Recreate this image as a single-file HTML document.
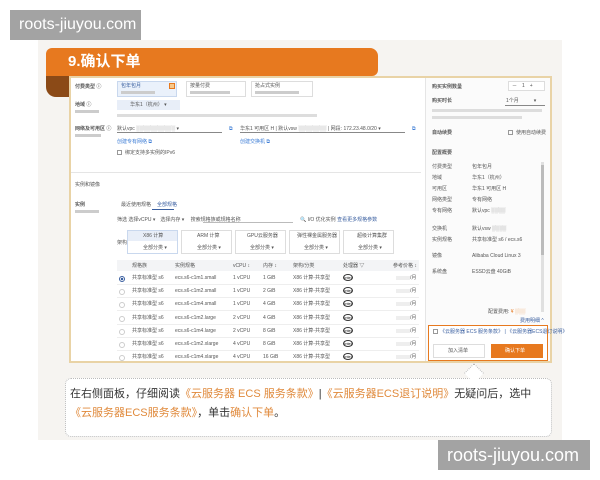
<!DOCTYPE html>
<html><head><meta charset="utf-8"><style>
*{margin:0;padding:0;box-sizing:border-box}
body{width:600px;height:480px;background:#fff;position:relative;overflow:hidden;font-family:"Liberation Sans","Noto Sans CJK SC",sans-serif}
.a{position:absolute}
.wm{background:#a3a3a3;color:#fff;font-size:16px;line-height:30px;padding-left:9px;white-space:nowrap;overflow:hidden}
.t{position:absolute;font-size:5px;color:#555;white-space:nowrap;line-height:6px}
.g{position:absolute;height:3px;background:#ccc}
.box{position:absolute;border:1px solid #ddd;background:#fff}
</style></head><body>
<div class="a" style="left:38px;top:40px;width:524px;height:400px;background:#f6f4f1"></div>
<div class="a" style="left:46px;top:76px;width:30px;height:21px;background:#8b4a17;border-radius:0 0 0 10px"></div>
<div class="a" style="left:46px;top:48px;width:332px;height:28px;background:#e7791f;border-radius:6px 8px 6px 0"></div>
<div class="a" style="left:68px;top:50px;font-size:15px;font-weight:bold;color:#fff;line-height:24px">9.确认下单</div>
<div class="a" style="left:69px;top:76px;width:483px;height:287px;background:#fff;border:2px solid #e9d3a6"></div>
<div class="a" style="left:425px;top:78px;width:125px;height:283px;background:#fbfbfb;border-left:1px solid #e5e5e5"></div>
<div class="t" style="left:75px;top:84px;font-weight:bold">付费类型 ⓘ</div>
<div class="box" style="left:117px;top:81px;width:60px;height:16px;background:#eaf1fb;border-color:#c9d8ee"></div>
<div class="a" style="left:169px;top:83px;width:6px;height:6px;border:1px solid #e7791f;background:#f7c98c"></div>
<div class="t" style="left:121px;top:83px;color:#3a5fa0">包年包月</div><div class="g" style="left:121px;top:91px;width:34px"></div>
<div class="box" style="left:186px;top:81px;width:60px;height:16px"></div><div class="t" style="left:190px;top:83px">按量付费</div><div class="g" style="left:190px;top:91px;width:40px"></div>
<div class="box" style="left:251px;top:81px;width:62px;height:16px"></div><div class="t" style="left:255px;top:83px">抢占式实例</div><div class="g" style="left:255px;top:91px;width:44px"></div>
<div class="t" style="left:75px;top:102px;font-weight:bold">地域 ⓘ</div><div class="g" style="left:75px;top:110px;width:24px"></div>
<div class="a" style="left:117px;top:100px;width:63px;height:10px;background:#e8eef8"></div><div class="t" style="left:130px;top:102px">华东1（杭州） ▾</div>
<div class="g" style="left:117px;top:114px;width:200px;background:#ddd"></div>
<div class="t" style="left:75px;top:126px;font-weight:bold">网络及可用区 ⓘ</div><div class="g" style="left:75px;top:134px;width:26px"></div>
<div class="a" style="left:117px;top:132px;width:105px;height:1px;background:#888"></div><div class="t" style="left:117px;top:126px">默认vpc ░░░░░░░░░░░ ▾</div>
<div class="t" style="left:229px;top:126px;color:#3a7bd5">⧉</div>
<div class="a" style="left:240px;top:132px;width:165px;height:1px;background:#888"></div><div class="t" style="left:240px;top:126px">华东1 可用区 H | 默认vsw ░░░░░░░░ | 网段: 172.23.48.0/20 ▾</div>
<div class="t" style="left:412px;top:126px;color:#3a7bd5">⧉</div>
<div class="t" style="left:117px;top:139px;color:#3a7bd5">创建专有网络 ⧉</div><div class="t" style="left:240px;top:139px;color:#3a7bd5">创建交换机 ⧉</div>
<div class="a" style="left:117px;top:150px;width:5px;height:5px;border:1px solid #999"></div><div class="t" style="left:125px;top:150px">绑定支持多实例的IPv6</div>
<div class="a" style="left:71px;top:172px;width:350px;height:1px;background:#e5e5e5"></div>
<div class="t" style="left:75px;top:182px">实例和镜像</div>
<div class="t" style="left:75px;top:202px;font-weight:bold">实例</div><div class="g" style="left:75px;top:210px;width:24px"></div>
<div class="t" style="left:121px;top:202px">最近使用规格</div><div class="t" style="left:157px;top:202px;color:#3a5fa0">全部规格</div>
<div class="a" style="left:152px;top:209px;width:22px;height:1px;background:#3a5fa0"></div>
<div class="t" style="left:117px;top:217px">筛选 选择vCPU ▾　选择内存 ▾　 搜索规格族或规格名称</div>
<div class="a" style="left:203px;top:222px;width:90px;height:1px;background:#bbb"></div>
<div class="t" style="left:300px;top:217px">🔍 I/O 优化实例 <span style="color:#3a5fa0">查看更多规格参数</span></div>
<div class="t" style="left:117px;top:240px">架构</div>
<div class="box" style="left:127px;top:230px;width:51px;height:24px;border-color:#c9d8ee"></div><div class="a" style="left:128px;top:231px;width:49px;height:10px;background:#e8eef8"></div>
<div class="t" style="left:143px;top:233px">X86 计算</div><div class="t" style="left:143px;top:245px">全部分类 ▾</div>
<div class="box" style="left:181px;top:230px;width:51px;height:24px"></div><div class="t" style="left:197px;top:233px">ARM 计算</div><div class="t" style="left:197px;top:245px">全部分类 ▾</div>
<div class="box" style="left:235px;top:230px;width:51px;height:24px"></div><div class="t" style="left:247px;top:233px">GPU云服务器</div><div class="t" style="left:250px;top:245px">全部分类 ▾</div>
<div class="box" style="left:289px;top:230px;width:51px;height:24px"></div><div class="t" style="left:297px;top:233px">弹性裸金属服务器</div><div class="t" style="left:304px;top:245px">全部分类 ▾</div>
<div class="box" style="left:343px;top:230px;width:51px;height:24px"></div><div class="t" style="left:357px;top:233px">超级计算集群</div><div class="t" style="left:358px;top:245px">全部分类 ▾</div>
<div class="a" style="left:117px;top:260px;width:302px;height:11px;background:#f3f4f6"></div>
<div class="t" style="left:132px;top:263px">规格族</div><div class="t" style="left:175px;top:263px">实例规格</div><div class="t" style="left:233px;top:263px">vCPU ↕</div><div class="t" style="left:263px;top:263px">内存 ↕</div><div class="t" style="left:293px;top:263px">架构/分类</div><div class="t" style="left:343px;top:263px">处理器 ▽</div><div class="t" style="left:393px;top:263px">参考价格 ↕</div>
<div id="rows"></div>
<script>
var d=[["c1m1.small","1 vCPU","1 GiB"],["c1m2.small","1 vCPU","2 GiB"],["c1m4.small","1 vCPU","4 GiB"],["c1m2.large","2 vCPU","4 GiB"],["c1m4.large","2 vCPU","8 GiB"],["c1m2.xlarge","4 vCPU","8 GiB"],["c1m4.xlarge","4 vCPU","16 GiB"]];
var h="";d.forEach(function(r,i){var y=275+i*13.2;
h+='<div class="a" style="left:119px;top:'+(y+1)+'px;width:6px;height:6px;border-radius:50%;border:1px solid '+(i?'#ccc':'#3a5fa0')+';background:'+(i?'#fff':'radial-gradient(#3a5fa0 40%,#fff 50%)')+'"></div>';
h+='<div class="t" style="left:132px;top:'+y+'px">共享标准型 s6</div><div class="t" style="left:175px;top:'+y+'px">ecs.s6-'+r[0]+'</div><div class="t" style="left:233px;top:'+y+'px">'+r[1]+'</div><div class="t" style="left:263px;top:'+y+'px">'+r[2]+'</div><div class="t" style="left:293px;top:'+y+'px">X86 计算-共享型</div>';
h+='<div class="a" style="left:343px;top:'+(y-1)+'px;width:10px;height:7px;border:1px solid #333;border-radius:50%;font-size:4px;line-height:5px;text-align:center">intel</div>';
h+='<div class="a" style="left:396px;top:'+(y+1)+'px;width:14px;height:4px;background:#eee"></div><div class="t" style="left:410px;top:'+y+'px">/月</div>';
if(i<6)h+='<div class="a" style="left:117px;top:'+(y+9)+'px;width:302px;height:1px;background:#eee"></div>';});
document.getElementById("rows").innerHTML=h;
</script>
<div class="t" style="left:432px;top:84px;font-weight:bold">购买实例数量</div>
<div class="box" style="left:508px;top:81px;width:37px;height:10px"></div><div class="t" style="left:512px;top:83px">－　1　+</div>
<div class="t" style="left:432px;top:98px;font-weight:bold">购买时长</div><div class="t" style="left:506px;top:98px">1个月　　　▾</div>
<div class="a" style="left:505px;top:105px;width:40px;height:1px;background:#888"></div>
<div class="g" style="left:432px;top:109px;width:110px;background:#ddd"></div><div class="g" style="left:432px;top:116px;width:90px;background:#ddd"></div>
<div class="t" style="left:432px;top:130px;font-weight:bold">自动续费</div><div class="a" style="left:508px;top:130px;width:5px;height:5px;border:1px solid #999"></div><div class="t" style="left:516px;top:130px">使用自动续费</div>
<div class="t" style="left:432px;top:150px;font-weight:bold">配置概要</div>
<div id="side"></div>
<script>
var s=[["付费类型","包年包月"],["地域","华东1（杭州）"],["可用区","华东1 可用区 H"],["网络类型","专有网络"],["专有网络","默认vpc ░░░░"],["交换机","默认vsw ░░░░"],["实例规格","共享标准型 s6 / ecs.s6"],["镜像","Alibaba Cloud Linux 3"],["系统盘","ESSD云盘 40GiB"]];
var ys=[164,175,186,197,208,226,237,253,269],h2="";
s.forEach(function(r,i){h2+='<div class="t" style="left:432px;top:'+ys[i]+'px">'+r[0]+'</div><div class="t" style="left:472px;top:'+ys[i]+'px">'+r[1]+'</div>';});
document.getElementById("side").innerHTML=h2;
</script>
<div class="a" style="left:541px;top:162px;width:3px;height:150px;background:#e0e0e0"></div><div class="a" style="left:541px;top:165px;width:3px;height:90px;background:#bbb"></div>
<div class="t" style="left:488px;top:309px">配置费用: <span style="color:#e7791f">¥ ░░░</span></div>
<div class="t" style="left:520px;top:318px;color:#3a5fa0">费用明细 ^</div>
<div class="a" style="left:428px;top:325px;width:120px;height:36px;border:1.5px solid #e7791f;background:#fff"></div>
<div class="a" style="left:433px;top:329px;width:5px;height:5px;border:1px solid #999"></div><div class="t" style="left:440px;top:329px;color:#3a5fa0">《云服务器 ECS 服务条款》 | 《云服务器ECS退订说明》</div>
<div class="box" style="left:433px;top:344px;width:52px;height:14px"></div><div class="t" style="left:448px;top:348px">加入清单</div>
<div class="a" style="left:491px;top:344px;width:52px;height:14px;background:#e7791f"></div><div class="t" style="left:505px;top:348px;color:#fff">确认下单</div>
<div class="a" style="left:65px;top:378px;width:487px;height:59px;border:1px dotted #bbb;border-radius:6px;background:#fff"></div>
<div class="a" style="left:467px;top:366px;width:14px;height:14px;background:#fff;border-left:1px dotted #bbb;border-top:1px dotted #bbb;transform:rotate(45deg)"></div>
<div class="a" style="left:70px;top:385px;font-size:11px;line-height:19px;color:#333;white-space:nowrap">在右侧面板，仔细阅读<span style="color:#e08a3c">《云服务器 ECS 服务条款》</span>|<span style="color:#e08a3c">《云服务器ECS退订说明》</span>无疑问后，选中<br><span style="color:#e08a3c">《云服务器ECS服务条款》</span>，单击<span style="color:#e08a3c">确认下单</span>。</div>
<div class="a wm" style="left:10px;top:10px;width:131px">roots-jiuyou.com</div>
<div class="a wm" style="left:438px;top:440px;width:152px;font-size:18px;padding-left:9px">roots-jiuyou.com</div>
</body></html>
